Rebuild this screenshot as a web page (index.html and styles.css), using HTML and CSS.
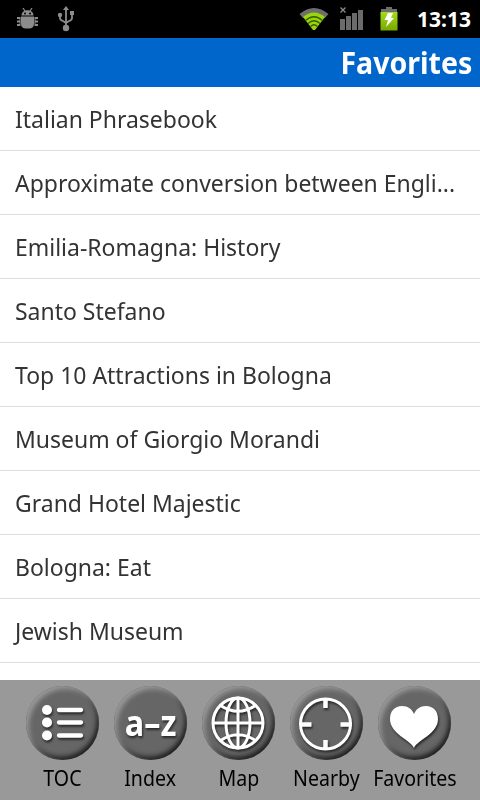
FILE: index.html
```html
<!DOCTYPE html>
<html lang="en">
<head>
    <meta charset="UTF-8">
    <meta name="viewport" content="width=device-width, initial-scale=1.0">
    <title>Favorites</title>
    <link rel="stylesheet" href="styles.css">
</head>
<body>
    <div class="phone">
        <div class="status-bar">
            <svg class="debug-icon" width="22" height="22" viewBox="0 0 22 22">
                <path d="M7 0l2 3M16 0l-2 3" stroke="#8c8c8c" stroke-width="1.2"/>
                <path d="M5.500 7.500c0-7 12-7 12 0z" fill="#8c8c8c"/>
                <path d="M5 8.500h13v7q0 5-5 5h-3q-5 0-5-5z" fill="#8c8c8c"/>
                <path d="M4 10H1M4 13.500H1M4 17H1M19 10h3M19 13.500h3M19 17h3" stroke="#8c8c8c" stroke-width="2"/>
                <path d="M4 9v9M19 9v9" stroke="#8c8c8c" stroke-width="1"/>
                <circle cx="9" cy="5.500" r="1" fill="#000"/>
                <circle cx="14" cy="5.500" r="1" fill="#000"/>
            </svg>
            <svg class="usb-icon" width="18" height="26" viewBox="0 0 18 26">
                <path d="M9 4v18M3 9v3q0 2 3 3l3 2M15 8v4q0 2-3 3l-3 2" fill="none" stroke="#8c8c8c" stroke-width="1.8"/>
                <path d="M6 4l3-4 3 4z" fill="#8c8c8c"/>
                <circle cx="3" cy="9" r="2.200" fill="#8c8c8c"/>
                <rect x="13" y="5" width="4" height="4" fill="#8c8c8c"/>
                <circle cx="9" cy="22" r="3.200" fill="#8c8c8c"/>
            </svg>
            <svg class="wifi-icon" width="30" height="24" viewBox="0 0 30 24">
                <path d="M.5 7Q15-5 29.500 7L26 11Q15 3 4 11z" fill="#6e6e6e"/>
                <path d="M4 10Q15 1 26 10L16 23h-2z" fill="#9bd60a"/>
                <path d="M6.500 13.500Q15 6 23.500 13.500M9 16.500Q15 11 21 16.500M11.500 19.500Q15 16 18.500 19.500" fill="none" stroke="#375f00" stroke-width="1.200"/>
            </svg>
            <svg class="signal-icon" width="24" height="24" viewBox="0 0 24 24">
                <path d="M0 12h5v11H0zM6 9h5v14H6zM12 6h5v17h-5zM18 3h5v20h-5z" fill="#6b6b6b"/>
                <path d="M.5 .5l5 5M5.500 .5l-5 5" stroke="#8c8c8c" stroke-width="1.300"/>
            </svg>
            <svg class="battery-icon" width="18" height="24" viewBox="0 0 18 24">
                <defs>
                    <linearGradient id="charge" x1="0" y1="0" x2="0" y2="1">
                        <stop offset="0" stop-color="#a4dc1c"/>
                        <stop offset="1" stop-color="#78a800"/>
                    </linearGradient>
                </defs>
                <path d="M6 0h6v2h5v4H1V2h5z" fill="#6e6e6e"/>
                <path d="M.5 5h17v18.500h-17z" fill="url(#charge)"/>
                <path d="M8 6h5l-2 5h3l-8 9 2-7H4.500z" fill="#fff"/>
            </svg>
            <span class="clock">13:13</span>
        </div>

        <div class="header">
            <h1>Favorites</h1>
        </div>

        <ul class="list">
            <li><span>Italian Phrasebook</span></li>
            <li><span>Approximate conversion between Engli...</span></li>
            <li><span>Emilia-Romagna: History</span></li>
            <li><span>Santo Stefano</span></li>
            <li><span>Top 10 Attractions in Bologna</span></li>
            <li><span>Museum of Giorgio Morandi</span></li>
            <li><span>Grand Hotel Majestic</span></li>
            <li><span>Bologna: Eat</span></li>
            <li><span>Jewish Museum</span></li>
        </ul>

        <div class="tab-bar">
            <div class="tab">
                <div class="tab-button">
                    <svg width="73" height="74" viewBox="0 0 73 74">
                        <path d="M33 24h22M33 36.500h22M33 49.500h22" stroke="#fff" stroke-width="4.300" stroke-linecap="round"/>
                        <circle cx="21" cy="24" r="5" fill="#fff"/>
                        <circle cx="21" cy="36.500" r="5" fill="#fff"/>
                        <circle cx="21" cy="49.500" r="5" fill="#fff"/>
                    </svg>
                </div>
                <span class="tab-label">TOC</span>
            </div>
            <div class="tab">
                <div class="tab-button"><span class="az">a–z</span></div>
                <span class="tab-label">Index</span>
            </div>
            <div class="tab">
                <div class="tab-button">
                    <svg width="73" height="74" viewBox="0 0 73 74" fill="none" stroke="#fff" stroke-width="3">
                        <circle cx="36" cy="37" r="25"/>
                        <ellipse cx="36" cy="37" rx="12" ry="25"/>
                        <path d="M36 12v50M11 37h50M18.500 19.500Q36 31 53.500 19.500M18.500 54.500Q36 43 53.500 54.500"/>
                    </svg>
                </div>
                <span class="tab-label">Map</span>
            </div>
            <div class="tab">
                <div class="tab-button">
                    <svg width="73" height="74" viewBox="0 0 73 74" fill="none" stroke="#fff">
                        <circle cx="35.500" cy="38" r="25" stroke-width="3"/>
                        <path d="M35.500 12v10M35.500 54v10M10 38.500h11.500M50.500 38.500h11" stroke-width="4.500"/>
                    </svg>
                </div>
                <span class="tab-label">Nearby</span>
            </div>
            <div class="tab">
                <div class="tab-button">
                    <svg width="73" height="74" viewBox="0 0 73 74">
                        <path d="M36 62C33 54 12 48 12 33C12 25 17 20 24 20C30 20 34 23 36 28C38 23 42 20 48 20C55 20 60 25 60 33C60 48 39 54 36 62z" fill="#fff"/>
                    </svg>
                </div>
                <span class="tab-label">Favorites</span>
            </div>
        </div>
    </div>
</body>
</html>
```
FILE: styles.css
```css
body {
    font-family: "Noto Sans", sans-serif;
    margin: 0;
    padding: 0;
    background-color: #fff;
}

.phone {
    display: flex;
    flex-direction: column;
    width: 480px;
    height: 800px;
    overflow: hidden;
}

.status-bar {
    display: flex;
    align-items: center;
    height: 38px;
    padding: 0 9px 0 16px;
    background-color: #000;
}

.usb-icon {
    margin-left: 19px;
}

.wifi-icon {
    margin-left: auto;
}

.signal-icon {
    margin-left: 11px;
}

.battery-icon {
    margin-left: 16px;
}

.clock {
    margin-left: 19px;
    color: #fff;
    font-size: 21px;
    font-weight: bold;
}

.header {
    display: flex;
    align-items: center;
    justify-content: flex-end;
    height: 49px;
    padding-right: 8px;
    background-color: #0066cc;
}

h1 {
    margin: 0;
    color: #fff;
    font-size: 31px;
    line-height: 49px;
    transform: scaleX(0.92);
    transform-origin: right;
}

.list {
    flex: 1;
    margin: 0;
    padding: 0;
    list-style: none;
}

.list li {
    box-sizing: border-box;
    height: 64px;
    padding-left: 15px;
    border-bottom: 1px solid #ddd;
    color: #333;
    font-size: 24px;
    line-height: 63px;
    white-space: nowrap;
}

.list span {
    display: inline-block;
    transform: scaleX(0.957);
    transform-origin: left;
}

.tab-bar {
    display: flex;
    box-sizing: border-box;
    height: 120px;
    padding: 6px 21px 0 18px;
    background-color: #999;
}

.tab {
    display: flex;
    flex: 1 1 0;
    flex-direction: column;
    align-items: center;
    min-width: 0;
}

.tab-button {
    display: flex;
    align-items: center;
    justify-content: center;
    width: 73px;
    height: 74px;
    border-radius: 50%;
    background-color: #666;
    box-shadow: inset 3px 3px 5px #999, inset -2px -3px 5px #1c1c1c;
}

.tab-button svg,
.az {
    filter: drop-shadow(1px 2px 1px rgba(0, 0, 0, 0.6));
}

.az {
    color: #fff;
    font-size: 36px;
    font-weight: bold;
    line-height: 66px;
    transform: scaleX(0.9);
}

.tab-label {
    color: #000;
    font-size: 22px;
    line-height: 34px;
    white-space: nowrap;
    transform: scaleX(0.89);
}
```
